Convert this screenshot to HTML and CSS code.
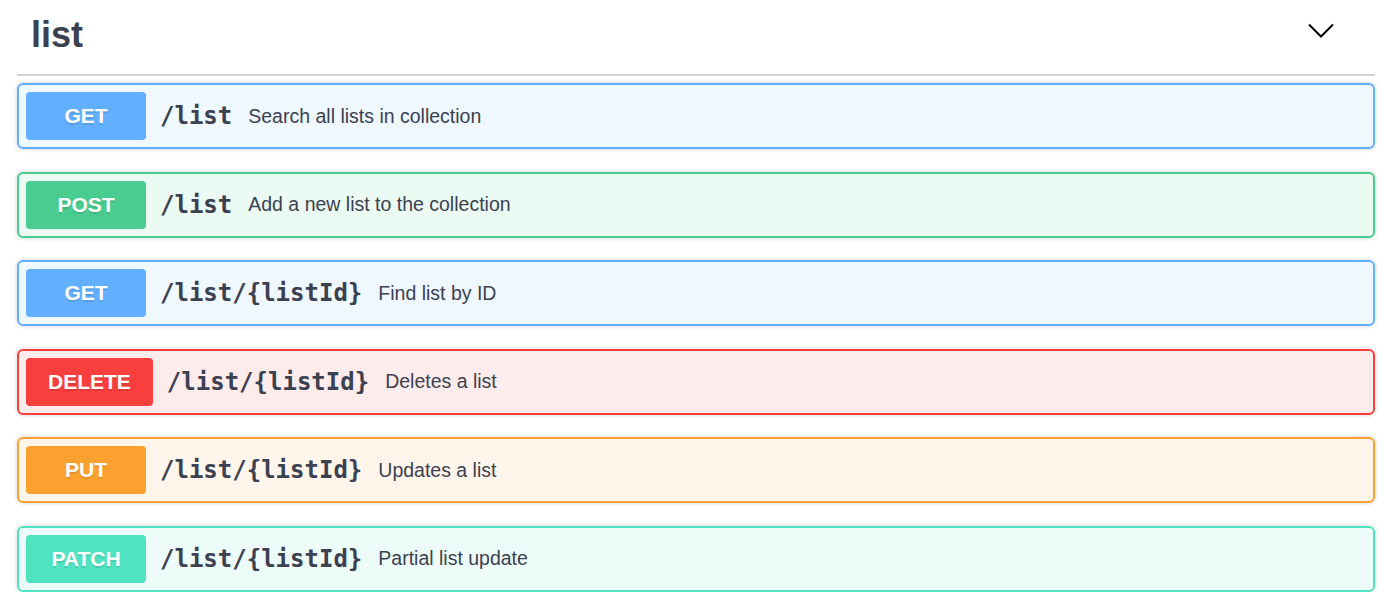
FILE: index.html
```html
<!DOCTYPE html>
<html lang="en">
<head>
<meta charset="utf-8">
<title>list</title>
<link rel="stylesheet" href="styles.css">
</head>
<body>
<div class="wrapper">
  <div class="tag-section">
    <h3 class="tag-heading">
      <span class="tag-name">list</span>
      <svg class="tag-arrow" width="26" height="16" viewBox="0 0 26 16" aria-hidden="true">
        <polyline points="1,1.5 13,13.5 25,1.5" fill="none" stroke="#000" stroke-width="2"/>
      </svg>
    </h3>
    <div class="ops">
      <div class="opblock opblock-get">
        <span class="method">GET</span>
        <span class="path">/list</span>
        <span class="desc">Search all lists in collection</span>
      </div>
      <div class="opblock opblock-post">
        <span class="method">POST</span>
        <span class="path">/list</span>
        <span class="desc">Add a new list to the collection</span>
      </div>
      <div class="opblock opblock-get">
        <span class="method">GET</span>
        <span class="path">/list/{listId}</span>
        <span class="desc">Find list by ID</span>
      </div>
      <div class="opblock opblock-delete">
        <span class="method">DELETE</span>
        <span class="path">/list/{listId}</span>
        <span class="desc">Deletes a list</span>
      </div>
      <div class="opblock opblock-put">
        <span class="method">PUT</span>
        <span class="path">/list/{listId}</span>
        <span class="desc">Updates a list</span>
      </div>
      <div class="opblock opblock-patch">
        <span class="method">PATCH</span>
        <span class="path">/list/{listId}</span>
        <span class="desc">Partial list update</span>
      </div>
    </div>
  </div>
</div>
</body>
</html>
```

FILE: styles.css
```css
html, body {
  margin: 0;
  padding: 0;
  background: #fff;
}

body {
  font-family: "Liberation Sans", Arial, sans-serif;
  color: #3b4151;
}

.wrapper {
  padding: 0 18px 0 17px;
}

.tag-heading {
  box-sizing: border-box;
  height: 76px;
  margin: 0 0 7px;
  padding: 0 41px 5px 15px;
  display: flex;
  align-items: center;
  justify-content: space-between;
  border-bottom: 2px solid #d3d4d8;
  font-size: 36px;
  font-weight: 700;
  line-height: normal;
  color: #3b4151;
}

.tag-name {
  margin-left: -1px;
}

.tag-arrow {
  display: block;
  margin-bottom: 7px;
}

.ops {
  display: flex;
  flex-direction: column;
  gap: 22.5px;
}

.opblock {
  box-sizing: border-box;
  height: 66px;
  display: flex;
  align-items: center;
  padding: 7px;
  border: 2px solid #000;
  border-radius: 6px;
  box-shadow: 0 0 4px rgba(0, 0, 0, 0.19);
}

.method {
  box-sizing: border-box;
  min-width: 120px;
  height: 48px;
  padding: 0 22px;
  display: flex;
  align-items: center;
  justify-content: center;
  border-radius: 4px;
  font-family: "Liberation Sans", Arial, sans-serif;
  font-size: 21px;
  font-weight: 700;
  color: #fff;
  text-shadow: 0 1.5px 0 rgba(0, 0, 0, 0.1);
}

.path {
  padding: 0 16px 0 14px;
  font-family: "DejaVu Sans Mono", monospace;
  font-size: 24px;
  font-weight: 700;
  color: #3b4151;
}

.desc {
  font-size: 19.5px;
  color: #3b4151;
}

.opblock-get {
  border-color: #61affe;
  background: rgba(97, 175, 254, 0.1);
}
.opblock-get .method { background: #61affe; }

.opblock-post {
  border-color: #49cc90;
  background: rgba(73, 204, 144, 0.1);
}
.opblock-post .method { background: #49cc90; }

.opblock-delete {
  border-color: #f93e3e;
  background: rgba(249, 62, 62, 0.1);
}
.opblock-delete .method { background: #f93e3e; }

.opblock-put {
  border-color: #fca130;
  background: rgba(252, 161, 48, 0.1);
}
.opblock-put .method { background: #fca130; }

.opblock-patch {
  border-color: #50e3c2;
  background: rgba(80, 227, 194, 0.1);
}
.opblock-patch .method { background: #50e3c2; }
```
